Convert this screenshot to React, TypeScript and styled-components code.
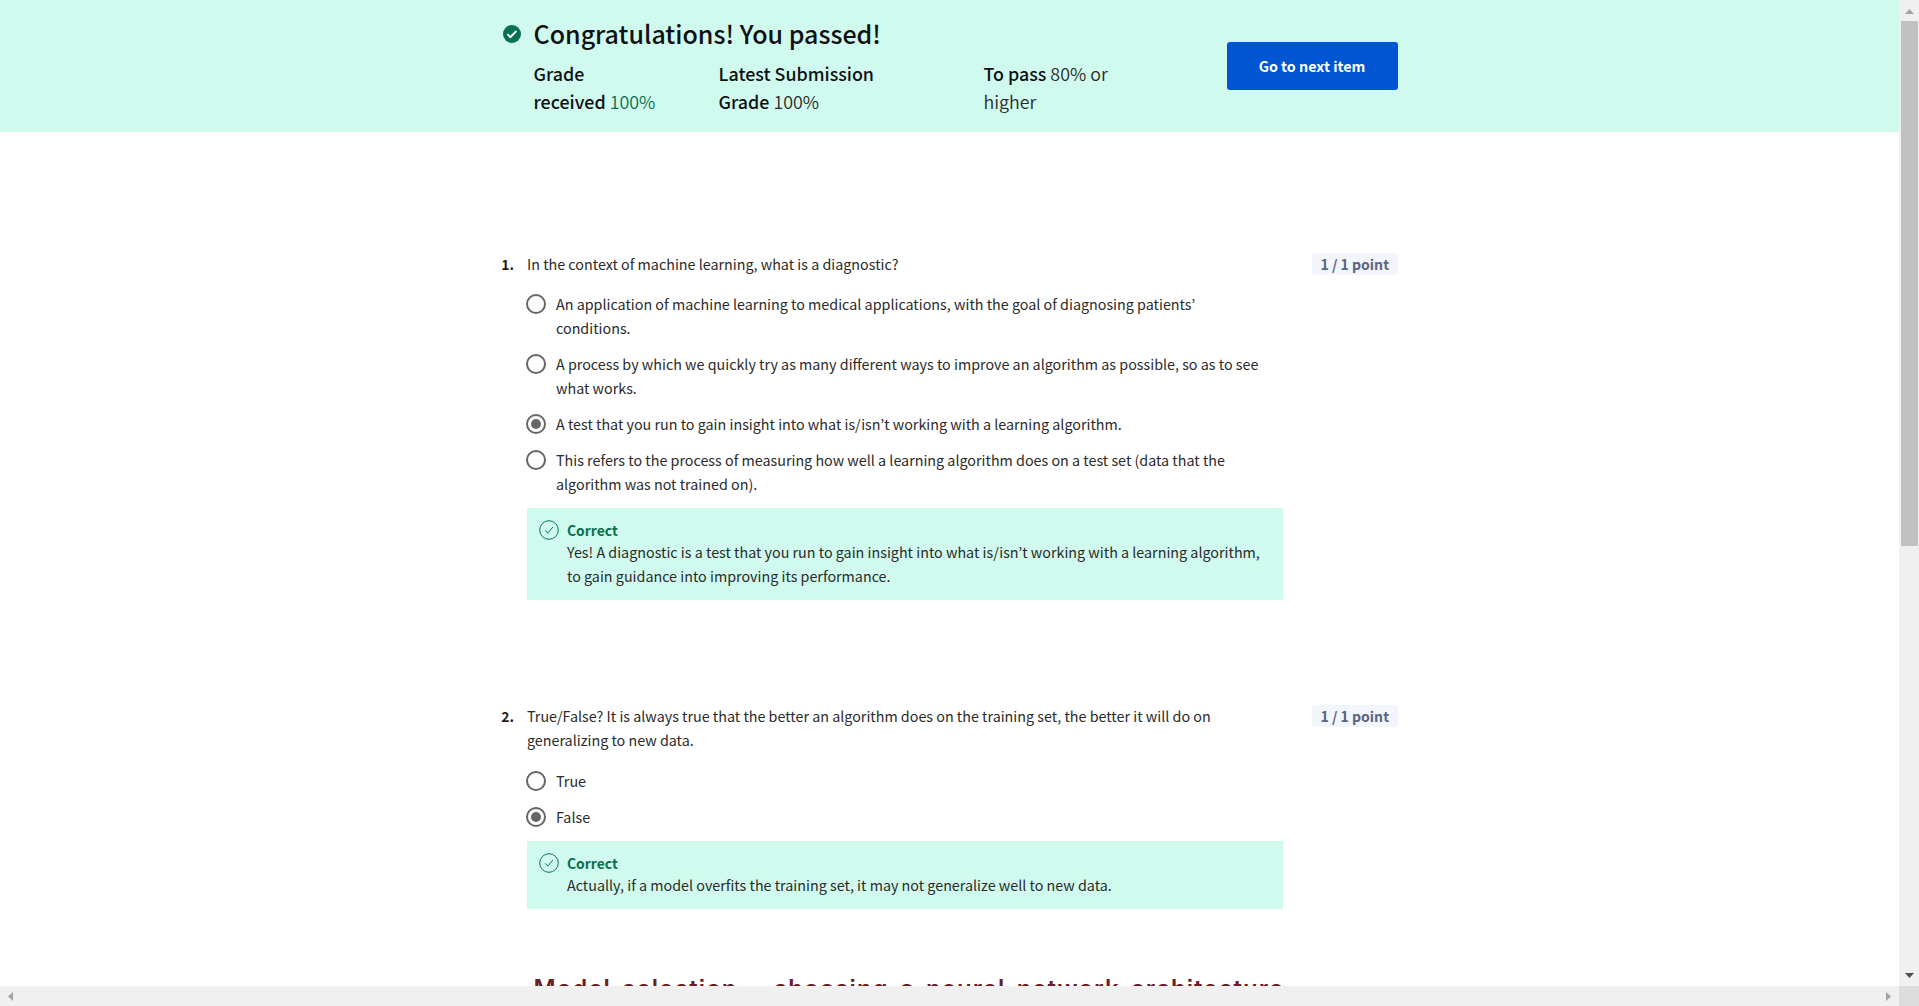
import React from 'react';
import styled, { createGlobalStyle } from 'styled-components';

const GlobalStyle = createGlobalStyle`
  *, *::before, *::after { box-sizing: border-box; }
  body {
    margin: 0;
    overflow: hidden;
    background: #fff;
    color: #2a2a2a;
    font-family: "Noto Sans CJK KR", "Noto Sans", sans-serif;
    font-size: 14.32px;
    line-height: 24px;
  }
`;

const Window = styled.div`
  display: grid;
  grid-template: minmax(0, 1fr) 20px / minmax(0, 1fr) 20px;
  height: 100vh;
`;

const Viewport = styled.main`
  overflow: hidden;
`;

const Banner = styled.header`
  height: 132px;
  background: #d0faed;
`;

const Column = styled.div`
  width: 896px;
  margin: 0 auto;
`;

const BannerContent = styled(Column)`
  display: flex;
  height: 100%;
  align-items: center;
  justify-content: space-between;
`;

const BannerMain = styled.div`
  display: grid;
  grid-template-columns: 32px auto;
  row-gap: 10px;
  align-self: flex-start;
  padding-top: 17px;
`;

const PassIcon = styled.svg`
  display: block;
  width: 18px;
  height: 18px;
  margin: 8px 0 0 1px;
`;

const Title = styled.h1`
  margin: 0;
  color: #0f1114;
  font-size: 25px;
  font-weight: 500;
  line-height: 32px;
`;

const Grades = styled.div`
  grid-column: 2;
  display: flex;
  gap: 64px;
`;

const Grade = styled.div<{ $width: number }>`
  width: ${(p) => p.$width}px;
  font-size: 17.85px;
  font-weight: 350;
  line-height: 28px;
  white-space: nowrap;
`;

const GradeLabel = styled.strong`
  color: #0f1114;
  font-weight: 500;
`;

const GradeValue = styled.span`
  color: #087051;
`;

const NextButton = styled.button`
  width: 171px;
  height: 48px;
  padding: 0;
  border: 0;
  border-radius: 3px;
  background: #0056d2;
  color: #fff;
  font: 700 14.3px/24px "Noto Sans CJK KR", "Noto Sans", sans-serif;
`;

const Quiz = styled(Column)`
  display: flex;
  flex-direction: column;
  gap: 104px;
  padding-top: 120px;
`;

const QuestionBlock = styled.section`
  display: grid;
  grid-template-columns: 25px 756px 1fr;
  align-items: start;
`;

const Num = styled.span`
  display: flex;
  justify-content: flex-end;
  padding-right: 12.5px;
  color: #1f1f1f;
  font-size: 14px;
  font-weight: 700;
  white-space: nowrap;
`;

const Prompt = styled.p<{ $gap: number }>`
  margin: 0 0 ${(p) => p.$gap}px;
  padding-left: 0.5px;
  white-space: nowrap;
`;

const Options = styled.div`
  display: grid;
  gap: 12px;
`;

const Option = styled.label`
  display: flex;
  gap: 10.5px;
  margin-left: -1px;
  white-space: nowrap;
`;

const Radio = styled.span<{ $checked?: boolean }>`
  flex: none;
  display: grid;
  place-items: center;
  width: 20px;
  height: 20px;
  margin-top: 2px;
  border: 2px solid #666;
  border-radius: 50%;

  &::after {
    content: "";
    width: 10px;
    height: 10px;
    border-radius: 50%;
    background: ${(p) => (p.$checked ? '#666' : 'transparent')};
  }
`;

const Feedback = styled.div`
  display: flex;
  gap: 8.5px;
  margin-top: 12px;
  padding: 12px;
  background: #d0faed;
  white-space: nowrap;
`;

const FeedbackIcon = styled.svg`
  flex: none;
  width: 20px;
  height: 20px;
`;

const FeedbackTitle = styled.div`
  color: #087051;
  font-size: 13.9px;
  font-weight: 700;
  line-height: 20px;
`;

const Points = styled.span`
  justify-self: end;
  width: 86px;
  height: 22px;
  margin-top: 1px;
  padding-left: 0.5px;
  border-radius: 4px;
  background: #f2f5fa;
  color: #596580;
  font-size: 14.05px;
  font-weight: 700;
  line-height: 22px;
  text-align: center;
`;

const Slide = styled.figure`
  margin: -40px 0 0 25px;
  padding-left: 7px;
  color: #6b1e26;
  font-family: Inter, sans-serif;
  font-size: 24px;
  font-weight: 600;
  line-height: 32px;
  letter-spacing: 1.05px;
  word-spacing: 4.2px;
  white-space: nowrap;
`;

const Bar = styled.div<{ $vertical?: boolean }>`
  display: flex;
  flex-direction: ${(p) => (p.$vertical ? 'column' : 'row')};
  justify-content: space-between;
  align-items: center;
  padding: ${(p) => (p.$vertical ? '9px 0 8px' : '0 8px')};
  background: #f0f0f0;
`;

const Thumb = styled.div`
  width: 17px;
  height: 525px;
  margin: 7px 0 auto 1px;
  background: #c1c1c1;
`;

const Corner = styled.div`
  background: #dcdcdc;
`;

const Arrow = styled.svg`
  display: block;
  flex: none;
`;

type Item = { text: React.ReactNode; checked?: boolean };
type QuestionProps = {
  number: number;
  prompt: React.ReactNode;
  promptGap: number;
  options: Item[];
  feedback: React.ReactNode;
};

function Question({ number, prompt, promptGap, options, feedback }: QuestionProps) {
  return (
    <QuestionBlock>
      <Num>{number}.</Num>
      <div>
        <Prompt $gap={promptGap}>{prompt}</Prompt>
        <Options>
          {options.map((o, i) => (
            <Option key={i}>
              <Radio $checked={o.checked} />
              <span>{o.text}</span>
            </Option>
          ))}
        </Options>
        <Feedback>
          <FeedbackIcon viewBox="0 0 20 20" fill="none" stroke="#087051">
            <circle cx="10" cy="10" r="9.3" />
            <path d="M6.2 10.4l2.6 2.7 5-6" />
          </FeedbackIcon>
          <div>
            <FeedbackTitle>Correct</FeedbackTitle>
            <div>{feedback}</div>
          </div>
        </Feedback>
      </div>
      <Points>1 / 1 point</Points>
    </QuestionBlock>
  );
}

export default function App() {
  return (
    <Window>
      <GlobalStyle />
      <Viewport>
        <Banner>
          <BannerContent>
            <BannerMain>
              <PassIcon viewBox="0 0 18 18">
                <circle cx="9" cy="9" r="9" fill="#087051" />
                <path d="M4.4 9.2l3 3 6-6.2" fill="none" stroke="#fff" strokeWidth="1.9" />
              </PassIcon>
              <Title>Congratulations! You passed!</Title>
              <Grades>
                <Grade $width={121}>
                  <GradeLabel>Grade<br />received</GradeLabel> <GradeValue>100%</GradeValue>
                </Grade>
                <Grade $width={201}>
                  <GradeLabel>Latest Submission<br />Grade</GradeLabel> 100%
                </Grade>
                <Grade $width={140}>
                  <GradeLabel>To pass</GradeLabel> 80% or<br />higher
                </Grade>
              </Grades>
            </BannerMain>
            <NextButton>Go to next item</NextButton>
          </BannerContent>
        </Banner>
        <Quiz>
          <Question
            number={1}
            promptGap={16}
            prompt="In the context of machine learning, what is a diagnostic?"
            options={[
              { text: <>An application of machine learning to medical applications, with the goal of diagnosing patients’<br />conditions.</> },
              { text: <>A process by which we quickly try as many different ways to improve an algorithm as possible, so as to see<br />what works.</> },
              { text: 'A test that you run to gain insight into what is/isn’t working with a learning algorithm.', checked: true },
              { text: <>This refers to the process of measuring how well a learning algorithm does on a test set (data that the<br />algorithm was not trained on).</> },
            ]}
            feedback={<>Yes! A diagnostic is a test that you run to gain insight into what is/isn’t working with a learning algorithm,<br />to gain guidance into improving its performance.</>}
          />
          <Question
            number={2}
            promptGap={17}
            prompt={<>True/False? It is always true that the better an algorithm does on the training set, the better it will do on<br />generalizing to new data.</>}
            options={[{ text: 'True' }, { text: 'False', checked: true }]}
            feedback="Actually, if a model overfits the training set, it may not generalize well to new data."
          />
          <Slide>Model selection – choosing a neural network architecture</Slide>
        </Quiz>
      </Viewport>
      <Bar $vertical>
        <Arrow width="9" height="5" viewBox="0 0 9 5"><path d="M4.5 0L9 5H0z" fill="#a3a3a3" /></Arrow>
        <Thumb />
        <Arrow width="9" height="5" viewBox="0 0 9 5"><path d="M0 0h9L4.5 5z" fill="#505050" /></Arrow>
      </Bar>
      <Bar>
        <Arrow width="5" height="9" viewBox="0 0 5 9"><path d="M5 0v9L0 4.5z" fill="#a3a3a3" /></Arrow>
        <Arrow width="5" height="9" viewBox="0 0 5 9"><path d="M0 0l5 4.5L0 9z" fill="#a3a3a3" /></Arrow>
      </Bar>
      <Corner />
    </Window>
  );
}
